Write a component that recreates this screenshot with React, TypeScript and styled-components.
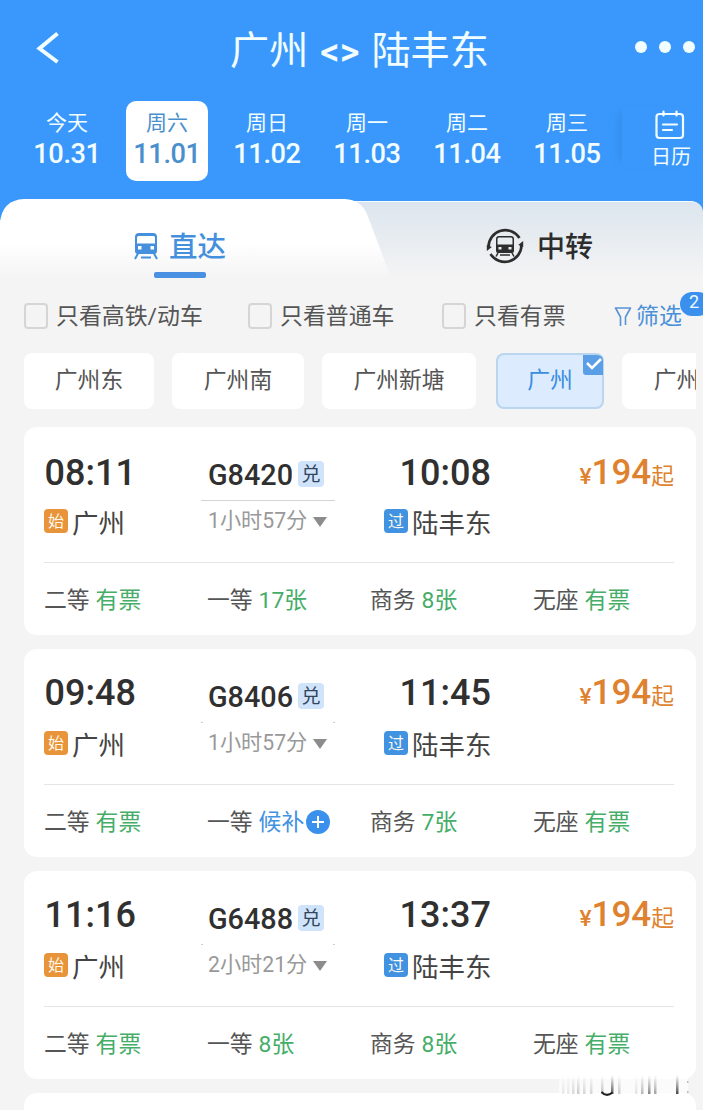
import React from "react";
import styled, { createGlobalStyle, css } from "styled-components";

const Global = createGlobalStyle`
  *, *::before, *::after { box-sizing: border-box; }
  body { margin: 0; background: #f4f4f4; font-family: Roboto, "Noto Sans CJK SC", sans-serif; }
`;

const Page = styled.main`
  position: relative;
  width: 703px;
  height: 1110px;
  overflow: hidden;
  background: #f4f4f4;
  color: #303030;
  white-space: nowrap;
`;

const Header = styled.header`
  height: 220px;
  margin-bottom: -21px;
  background: #3a98fc;
  color: #f2fdff;
`;

const TitleBar = styled.div`
  display: grid;
  grid-template-columns: 130px 1fr 130px;
  align-items: center;
  height: 101px;
  padding: 0 8px 0 36px;
  > svg { margin-bottom: 6px; }
`;

const Title = styled.h1`
  display: flex;
  justify-content: center;
  gap: 12px;
  margin: 2px 12px 0 0;
  font-size: 39.2px;
  line-height: 50px;
  font-weight: 400;
`;

const Arrows = styled.span`
  padding-top: 1px;
  font-size: 38px;
  font-weight: 500;
`;

const More = styled.div`
  display: flex;
  justify-content: flex-end;
  gap: 12px;
  margin-bottom: 7px;
  i { width: 12px; height: 12px; border-radius: 50%; background: #f2fdff; }
`;

const DateBar = styled.nav`
  display: flex;
  padding-left: 17px;
`;

const DateItem = styled.div<{ $active?: boolean }>`
  width: 82px;
  height: 80px;
  margin-right: 18px;
  padding-top: 8px;
  flex: none;
  border-radius: 10px;
  text-align: center;
  ${(p) => p.$active && css`background: #fff; color: #4a8fcd;`}
  &:first-child { margin-left: 9px; }
`;

const Weekday = styled.div`
  font-size: 21px;
  line-height: 28px;
`;

const DayNumber = styled.div`
  font-size: 27.2px;
  font-weight: 500;
  letter-spacing: -0.4px;
  line-height: 34px;
`;

const CalendarButton = styled.div`
  display: flex;
  flex-direction: column;
  align-items: center;
  flex: 1;
  height: 60px;
  margin: 6px 0 0 -4px;
  padding: 3px 0 0 17px;
  box-shadow: -9px 0 8px -6px #348de9;
  font-size: 20px;
  line-height: 28px;
  svg { display: block; flex: none; margin-left: -2px; }
  span { margin-top: 3px; }
`;

const Tabs = styled.div`
  display: flex;
  height: 79px;
`;

const ActiveTab = styled.div`
  position: relative;
  z-index: 1;
  display: flex;
  justify-content: center;
  gap: 10px;
  width: 392px;
  height: 79px;
  padding: 30px 32px 0 0;
  background: linear-gradient(#fff 55%, #f4f4f4);
  clip-path: path("M0 24 Q2 1 24 0 H345 Q361 1 367 15 L391 79 H0 Z");
  color: #4590dd;
  font-size: 28.5px;
  font-weight: 500;
  line-height: 37px;
  svg { margin-top: 4px; }
`;

const Underline = styled.span`
  position: absolute;
  left: 154px;
  bottom: 0;
  width: 52px;
  height: 6px;
  border-radius: 2px;
  background: #4a90e2;
`;

const OtherTab = styled.div`
  display: flex;
  gap: 13px;
  flex: 1;
  height: 77px;
  margin: 2px 0 0 -60px;
  padding: 25px 0 0 154px;
  border-top: 1px solid #f5fbff;
  border-top-right-radius: 12px;
  background: linear-gradient(#dce5ee, #f4f4f4);
  color: #2d2d2d;
  font-size: 28px;
  font-weight: 500;
  line-height: 42px;
`;

const Filters = styled.div`
  display: flex;
  align-items: center;
  height: 75px;
  padding: 1px 0 0 24px;
  font-size: 22.9px;
  line-height: 30px;
  color: #555;
`;

const Check = styled.label<{ $width: number }>`
  display: flex;
  align-items: center;
  gap: 8px;
  width: ${(p) => p.$width}px;
  span { padding-top: 1px; }
  &::before {
    content: "";
    width: 24px;
    height: 26px;
    border: 2px solid #d5d5d5;
    border-radius: 4px;
  }
`;

const FilterButton = styled.div`
  position: relative;
  display: flex;
  align-items: center;
  gap: 4px;
  padding-top: 1px;
  color: #4a90d9;
`;

const Count = styled.span`
  position: absolute;
  left: 66px;
  top: -9px;
  width: 30px;
  height: 24px;
  padding-left: 9px;
  border-radius: 12px;
  background: #3a90ec;
  color: #eefaff;
  font-size: 18px;
  line-height: 19px;
`;

const Chips = styled.div`
  display: flex;
  gap: 18px;
  width: 696px;
  margin-bottom: 18px;
  padding-left: 24px;
  overflow: hidden;
`;

const Chip = styled.div<{ $width: number; $active?: boolean; $shift?: number }>`
  position: relative;
  flex: none;
  width: ${(p) => p.$width}px;
  height: 56px;
  margin-left: ${(p) => p.$shift ?? 0}px;
  padding-top: 13px;
  border-radius: 8px;
  background: #fff;
  color: #555;
  font-size: 22.8px;
  line-height: 30px;
  text-align: center;
  ${(p) => p.$active && css`
    background: #dcecfe;
    box-shadow: inset 0 0 0 2px #b9d6ee;
    color: #3a8ee2;
  `}
  svg { position: absolute; top: 2px; right: 1px; }
`;

const Card = styled.article`
  height: 208px;
  margin: 0 7px 14px 24px;
  padding: 0 22px 0 20px;
  border-radius: 13px;
  background: #fff;
`;

const Trip = styled.div`
  display: grid;
  grid-template-columns: 156px 184px 1fr auto;
  height: 136px;
  border-bottom: 1px solid #e5e5e5;
`;

const Stop = styled.div<{ $top: number }>`
  display: flex;
  flex-direction: column;
  height: 110px;
  padding-top: ${(p) => p.$top}px;
`;

const Time = styled.div<{ $indent?: boolean }>`
  padding-left: ${(p) => (p.$indent ? 15.5 : 0.5)}px;
  font-size: 36px;
  font-weight: 500;
  line-height: 44px;
`;

const Place = styled.div`
  display: flex;
  align-items: flex-start;
  gap: 4px;
  height: 28px;
  margin-top: auto;
  color: #444;
  font-size: 26.5px;
  line-height: 29px;
`;

const Mark = styled.i<{ $color: string }>`
  width: 24px;
  height: 24px;
  border-radius: 4px;
  background: ${(p) => p.$color};
  color: #fdf9ec;
  font-size: 16px;
  font-style: normal;
  line-height: 26px;
  text-align: center;
`;

const Middle = styled.div`
  width: 135px;
  padding-top: 31px;
`;

const TrainNumber = styled.div`
  display: flex;
  gap: 5px;
  height: 34px;
  padding-left: 8px;
  font-size: 28.8px;
  font-weight: 500;
  line-height: 34px;
`;

const Redeem = styled.i`
  width: 26px;
  height: 26px;
  margin-top: 3px;
  border-radius: 4px;
  background: #cfe3fa;
  color: #33435a;
  font-size: 19px;
  font-weight: 400;
  font-style: normal;
  line-height: 28px;
  text-align: center;
`;

const Rule = styled.div<{ $solid: boolean }>`
  height: 2px;
  margin: 7px 0 1px 1px;
  background: ${(p) =>
    p.$solid
      ? "linear-gradient(#d5d5d5, #d5d5d5)"
      : "linear-gradient(90deg, #ccc 2px, transparent 2px, transparent 132px, #ccc 132px)"};
  background-size: 100% 1px;
  background-position: 0 1px;
  background-repeat: no-repeat;
`;

const Duration = styled.div`
  display: flex;
  align-items: center;
  gap: 6px;
  padding: 4px 0 0 8px;
  color: #999;
  font-size: 21.2px;
  line-height: 30px;
  &::after {
    content: "";
    margin-top: 1px;
    border: 7px solid transparent;
    border-top: 10px solid #8c8c8c;
    border-bottom: 0;
  }
`;

const Price = styled.div<{ $top: number }>`
  padding-top: ${(p) => p.$top}px;
  color: #de8230;
  font-size: 22.8px;
  line-height: 44px;
  b { font-size: 35px; font-weight: 500; }
  span { font-weight: 500; }
`;

const Seats = styled.div`
  display: grid;
  grid-template-columns: 163px 163px 163px 1fr;
  padding-top: 22px;
  color: #555;
  font-size: 22.8px;
  line-height: 32px;
`;

const Seat = styled.div`
  display: flex;
  align-items: center;
  gap: 6px;
`;

const Availability = styled.span<{ $waitlist?: boolean }>`
  display: flex;
  align-items: center;
  gap: 1px;
  color: ${(p) => (p.$waitlist ? "#4292e2" : "#45ad68")};
  svg { margin: -2px 0 0 1px; }
`;

const Watermark = styled.svg`
  position: absolute;
  left: 555px;
  top: 1074px;
`;

const BackIcon = () => (
  <svg width="24" height="34" viewBox="0 0 24 34" fill="none" stroke="#f2fdff" strokeWidth="4">
    <path d="M21.500 2.500 3.500 17.500l18 13.500" />
  </svg>
);

const CalendarIcon = () => (
  <svg width="30" height="30" viewBox="0 0 30 30" fill="none" stroke="#f2fdff" strokeWidth="2.2" strokeLinecap="round">
    <rect x="1.500" y="4" width="26.500" height="24" rx="3" />
    <path d="M8.500 1.500v4M21.500 1.500v4M8 14.500h14M8 20h9" />
  </svg>
);

const TrainIcon = () => (
  <svg width="25" height="27" viewBox="0 0 25 27">
    <path fill="#4590dd" fillRule="evenodd" d="M5 0h14q4 0 4 4v14q0 3-3 3H4q-3 0-3-3V4q0-4 4-4Zm-.5 3q-1.500 0-1.500 1.500v6h18v-6Q21 3 19.500 3ZM4 13v3.500h3.500V13Zm12.500 0v3.500H20V13Z" />
    <path d="M4 20.500 1 26M20 20.500l3 5.500M7 24.500h10" stroke="#4590dd" strokeWidth="2" fill="none" />
  </svg>
);

const TransferIcon = () => (
  <svg width="38" height="38" viewBox="0 0 38 38" fill="none" stroke="#2d2d2d">
    <path d="M2.500 20A16.800 16.800 0 0 1 33.500 11" strokeWidth="2.600" />
    <path d="M35.500 18A16.800 16.800 0 0 1 4.500 27" strokeWidth="2.600" />
    <path d="M.800 18v6l5-4ZM37.200 20v-6l-5 4Z" fill="#2d2d2d" stroke="none" />
    <path fill="#2d2d2d" stroke="none" fillRule="evenodd" d="M13 9h12q3 0 3 3v12q0 2-2 2H12q-2 0-2-2V12q0-3 3-3Zm0 1.500q-1.500 0-1.500 1.500v5.500h15V12q0-1.500-1.500-1.500ZM12.500 20v2.500h3V20Zm10 0v2.500h3V20Z" />
    <path d="M12 26l-2 3.500M26 26l2 3.500M14 28h10" strokeWidth="1.500" />
  </svg>
);

const FunnelIcon = () => (
  <svg width="18" height="22" viewBox="0 0 18 22" fill="none" stroke="#5a93d3" strokeWidth="1.600" strokeLinejoin="round">
    <path d="M6.500 20V11L1.500 2h15l-5 9v8" />
  </svg>
);

const CornerCheck = () => (
  <svg width="20" height="20" viewBox="0 0 20 20">
    <path d="M0 0h14q6 0 6 6v14H3q-3 0-3-3Z" fill="#5a9fe6" />
    <path d="m4 8 5 5 9-9" fill="none" stroke="#fff" strokeWidth="2.600" />
  </svg>
);

const PlusIcon = () => (
  <svg width="24" height="24" viewBox="0 0 24 24">
    <circle cx="12" cy="12" r="12" fill="#3a90ec" />
    <path d="M12 6v12M6 12h12" stroke="#fff" strokeWidth="2" />
  </svg>
);

const dates = [
  ["今天", "10.31"],
  ["周六", "11.01"],
  ["周日", "11.02"],
  ["周一", "11.03"],
  ["周二", "11.04"],
  ["周三", "11.05"],
];

const trains = [
  { from: "08:11", to: "10:08", no: "G8420", time: "1小时57分", first: "17张", business: "8张" },
  { from: "09:48", to: "11:45", no: "G8406", time: "1小时57分", first: "候补", business: "7张" },
  { from: "11:16", to: "13:37", no: "G6488", time: "2小时21分", first: "8张", business: "8张" },
];

const marks: [number, number][] = [
  [7, 0.1], [12, 0.1], [17, 0.18], [22, 0.25], [28, 0.2], [35, 0.2], [46, 0.3],
  [56, 0.85], [63, 0.25], [80, 0.12], [86, 0.35], [93, 0.6], [99, 0.45], [121, 0.9],
];

export default function App() {
  return (
    <Page>
      <Global />
      <Header>
        <TitleBar>
          <BackIcon />
          <Title>
            <span>广州</span>
            <Arrows>&lt;&gt;</Arrows>
            <span>陆丰东</span>
          </Title>
          <More><i /><i /><i /></More>
        </TitleBar>
        <DateBar>
          {dates.map(([day, date], i) => (
            <DateItem key={date} $active={i === 1}>
              <Weekday>{day}</Weekday>
              <DayNumber>{date}</DayNumber>
            </DateItem>
          ))}
          <CalendarButton>
            <CalendarIcon />
            <span>日历</span>
          </CalendarButton>
        </DateBar>
      </Header>
      <Tabs>
        <ActiveTab>
          <TrainIcon />
          直达
          <Underline />
        </ActiveTab>
        <OtherTab>
          <TransferIcon />
          中转
        </OtherTab>
      </Tabs>
      <Filters>
        <Check $width={224}><span>只看高铁/动车</span></Check>
        <Check $width={194}><span>只看普通车</span></Check>
        <Check $width={172}><span>只看有票</span></Check>
        <FilterButton>
          <FunnelIcon />
          筛选
          <Count>2</Count>
        </FilterButton>
      </Filters>
      <Chips>
        <Chip $width={130}>广州东</Chip>
        <Chip $width={132}>广州南</Chip>
        <Chip $width={154}>广州新塘</Chip>
        <Chip $width={108} $active $shift={2}>
          广州
          <CornerCheck />
        </Chip>
        <Chip $width={132}>广州北</Chip>
      </Chips>
      {trains.map((t, i) => {
        const top = i === 0 ? 24 : 22;
        return (
          <Card key={t.no}>
            <Trip>
              <Stop $top={top}>
                <Time>{t.from}</Time>
                <Place><Mark $color="#e8943a">始</Mark>广州</Place>
              </Stop>
              <Middle>
                <TrainNumber>{t.no}<Redeem>兑</Redeem></TrainNumber>
                <Rule $solid={i === 0} />
                <Duration>{t.time}</Duration>
              </Middle>
              <Stop $top={top}>
                <Time $indent>{t.to}</Time>
                <Place><Mark $color="#4292e2">过</Mark>陆丰东</Place>
              </Stop>
              <Price $top={top}><span>¥</span><b>194</b>起</Price>
            </Trip>
            <Seats>
              <Seat>二等<Availability>有票</Availability></Seat>
              <Seat>
                一等
                <Availability $waitlist={t.first === "候补"}>
                  {t.first}
                  {t.first === "候补" && <PlusIcon />}
                </Availability>
              </Seat>
              <Seat>商务<Availability>{t.business}</Availability></Seat>
              <Seat>无座<Availability>有票</Availability></Seat>
            </Seats>
          </Card>
        );
      })}
      <Card />
      <Watermark width="136" height="24" viewBox="0 0 136 24">
        <defs>
          <linearGradient id="fade" x1="0" y1="0" x2="0" y2="1">
            <stop offset="0" stopColor="#555" stopOpacity="0" />
            <stop offset="1" stopColor="#333" />
          </linearGradient>
        </defs>
        <rect x="4" y="2" width="129" height="17" fill="#fff" opacity="0.6" />
        {marks.map(([x, o]) => (
          <rect key={x} x={x} y="1" width="2.500" height="19" fill="url(#fade)" opacity={o} />
        ))}
        <path d="M46.500 18q5 5.500 11 .5" fill="none" stroke="#222" strokeWidth="2" />
        <path d="M132 8h1.500M132 18h1.500" stroke="#aaa" strokeWidth="1.500" />
      </Watermark>
    </Page>
  );
}
